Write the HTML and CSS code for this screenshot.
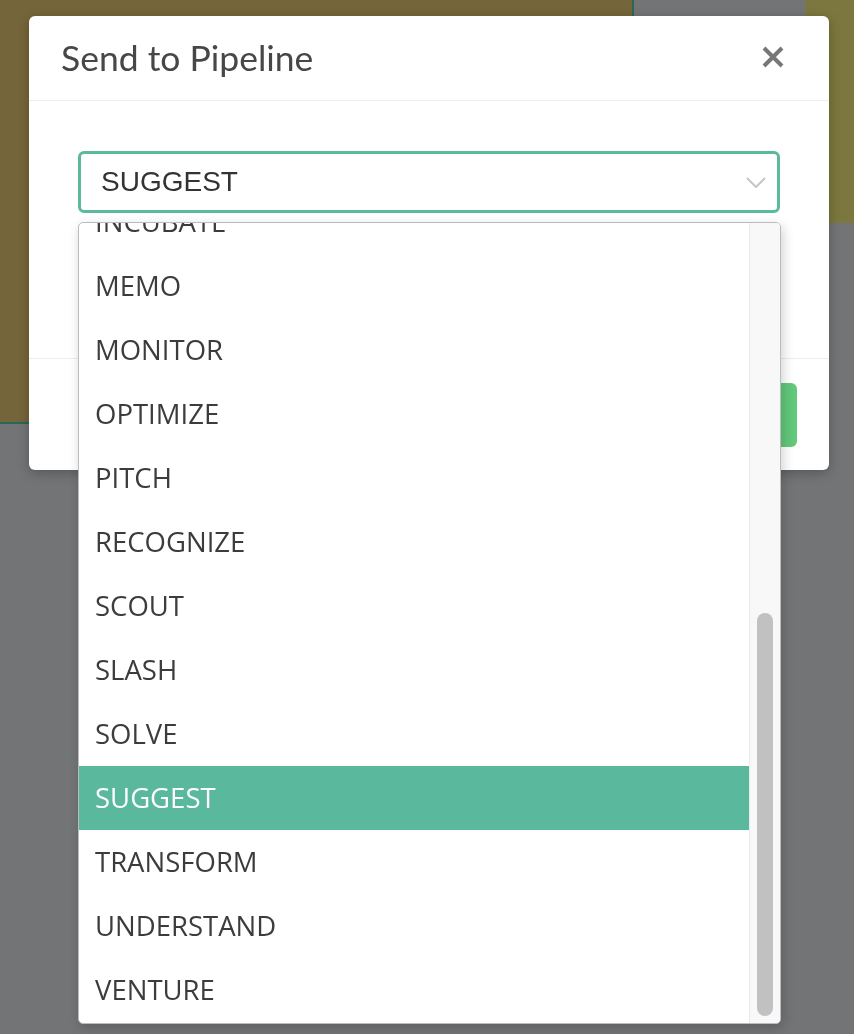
FILE: index.html
```html
<!DOCTYPE html>
<html lang="en">
<head>
  <meta charset="UTF-8" />
  <title>Send to Pipeline</title>
  <link rel="stylesheet" href="styles.css">
</head>
<body>
  <div class="page">
    <div class="board"></div>
    <div class="side"></div>
  </div>

  <div class="overlay">
    <div class="modal">
      <div class="modal-header">
        <h2>Send to Pipeline</h2>
        <button class="close" aria-label="Close">
          <svg width="24" height="24" viewBox="0 0 24 24">
            <path d="M3 3 L21 21 M21 3 L3 21" stroke="#777" stroke-width="4" stroke-linecap="butt" fill="none"/>
          </svg>
        </button>
      </div>
      <div class="modal-body">
        <div class="select">
          <span>SUGGEST</span>
          <svg class="chevron" width="20" height="11" viewBox="0 0 20 11">
            <path d="M1 1 L10 10 L19 1" stroke="#c3c6ca" stroke-width="2" fill="none"/>
          </svg>
        </div>
      </div>
      <div class="modal-footer">
        <button class="send">Send</button>
      </div>
    </div>
  </div>

  <!-- native option list, open -->
  <div class="dropdown">
    <ul class="options">
      <li>INCUBATE</li>
      <li>MEMO</li>
      <li>MONITOR</li>
      <li>OPTIMIZE</li>
      <li>PITCH</li>
      <li>RECOGNIZE</li>
      <li>SCOUT</li>
      <li>SLASH</li>
      <li>SOLVE</li>
      <li class="selected">SUGGEST</li>
      <li>TRANSFORM</li>
      <li>UNDERSTAND</li>
      <li>VENTURE</li>
    </ul>
    <div class="scrollbar">
      <div class="thumb"></div>
    </div>
  </div>
</body>
</html>
```

FILE: styles.css
```css
body {
  margin: 0;
  background-color: #737476;
  font-family: Lato, "Open Sans", sans-serif;
  height: 1034px;
  overflow: hidden;
}

.page {
  display: flex;
  align-items: flex-start;
}

.board {
  box-sizing: border-box;
  width: 634px;
  height: 424px;
  background-color: #75653a;
  border-right: 2px solid #2c6657;
  border-bottom: 2px solid #2c6657;
}

.side {
  margin-left: auto;
  width: 49px;
  height: 223px;
  background-color: #7c773e;
}

.overlay {
  position: fixed;
  top: 0;
  left: 0;
  right: 0;
  bottom: 0;
  padding: 16px 0 0 29px;
}

.modal {
  width: 800px;
  background-color: #fff;
  border-radius: 6px;
  box-shadow: 0 3px 12px #00000040;
}

.modal-header {
  height: 84px;
  display: flex;
  align-items: center;
  justify-content: space-between;
  padding: 0 44px 0 32px;
  border-bottom: 1px solid #eeeeee;
}

.modal-header h2 {
  margin: 0 0 1px 0;
  font-size: 35.5px;
  font-weight: normal;
  color: #474747;
}

.close {
  border: none;
  background: none;
  padding: 0;
  width: 24px;
  height: 24px;
  margin-bottom: 3px;
}

.modal-body {
  padding: 50px 49px 145px;
}

.select {
  box-sizing: border-box;
  height: 62px;
  display: flex;
  align-items: center;
  justify-content: space-between;
  padding: 0 11px 0 20px;
  border: 3px solid #5bb99d;
  border-radius: 6px;
  font-family: "Liberation Sans", Arial, sans-serif;
  font-size: 28px;
  color: #333;
}

.modal-footer {
  display: flex;
  justify-content: flex-end;
  padding: 24px 32px 23px;
  border-top: 1px solid #eeeeee;
}

.send {
  width: 120px;
  height: 64px;
  border: none;
  border-radius: 6px;
  background-color: #62c87a;
  color: #fff;
  font-size: 24px;
}

.dropdown {
  position: absolute;
  left: 78px;
  top: 222px;
  width: 703px;
  height: 802px;
  box-sizing: border-box;
  border: 1px solid #b9bcc0;
  border-radius: 5px;
  background-color: #fff;
  box-shadow: 2px 4px 12px #00000030;
  overflow: hidden;
  display: flex;
}

.options {
  list-style: none;
  margin: -33px 0 0 0;
  padding: 0;
  flex: 1;
  font-family: "Open Sans", sans-serif;
  font-size: 27.5px;
  color: #3c3c3c;
}

.options li {
  height: 64px;
  line-height: 64px;
  padding-left: 16px;
}

.options li.selected {
  background-color: #5ab99c;
  color: #fff;
}

.scrollbar {
  width: 30px;
  background-color: #f8f8f8;
  border-left: 1px solid #ebebeb;
  position: relative;
}

.thumb {
  position: absolute;
  left: 7px;
  top: 390px;
  width: 16px;
  height: 403px;
  border-radius: 8px;
  background-color: #c1c1c1;
}
```
